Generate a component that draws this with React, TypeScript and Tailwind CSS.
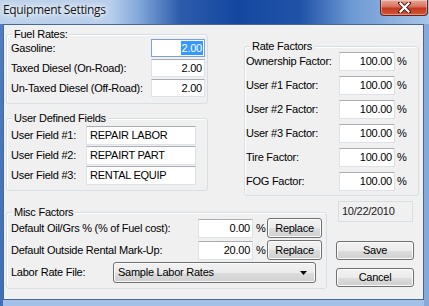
import React from "react";

const btn =
  "rounded-[3px] border border-[#707070] bg-[linear-gradient(#f2f2f2_0%,#ebebeb_50%,#dddddd_51%,#cfcfcf_100%)] shadow-[inset_0_0_0_1px_#fbfbfb] flex items-center justify-center";

const box = "bg-white border border-[#dde1e8] border-t-[#abadb3] flex items-center";

function Group({
  label,
  className,
  children,
}: {
  label: string;
  className: string;
  children: React.ReactNode;
}) {
  return (
    <div className={"relative rounded-[3px] border border-[#d5dfe5] shadow-[inset_1px_1px_0_#ffffff] " + className}>
      <div className="absolute left-[5px] top-[-7px] px-[2px] leading-[13px] bg-[#f0f0f0]">{label}</div>
      {children}
    </div>
  );
}

function NumBox({ value, w, focused }: { value: string; w: string; focused?: boolean }) {
  return (
    <div
      className={
        (focused
          ? "bg-white border border-[#7da2ce] flex items-center"
          : box) +
        " justify-end pr-[1px] h-[18px] " +
        w
      }
    >
      {focused ? (
        <span className="bg-[#3399ff] text-white leading-[14px] px-[1px]">{value}</span>
      ) : (
        <span className="pr-[1px]">{value}</span>
      )}
    </div>
  );
}

export default function App() {
  const fuel = [
    ["Gasoline:", "2.00", true],
    ["Taxed Diesel (On-Road):", "2.00", false],
    ["Un-Taxed Diesel (Off-Road):", "2.00", false],
  ] as const;
  const users = [
    ["User Field #1:", "REPAIR LABOR"],
    ["User Field #2:", "REPAIRT PART"],
    ["User Field #3:", "RENTAL EQUIP"],
  ];
  const rates = [
    "Ownership Factor:",
    "User #1 Factor:",
    "User #2 Factor:",
    "User #3 Factor:",
    "Tire Factor:",
    "FOG Factor:",
  ];

  return (
    <div className="w-[429px] h-[306px] flex flex-col overflow-hidden font-['Liberation_Sans',Arial,sans-serif] text-[11px] tracking-[-0.25px] text-black">
      {/* Title bar */}
      <div className="h-[24px] shrink-0 flex items-start bg-[linear-gradient(90deg,#bcd2ec_0%,#b6cdeb_26%,#7ca3d7_33%,#2d5cab_42%,#1448a0_55%,#2053a8_70%,#6d99d4_82%,#a9c5e8_100%)]">
        <div className="pl-[3px] pt-[2px] text-[12px] leading-[16px] tracking-[-0.35px] font-['Open_Sans',sans-serif] text-[#151515] [text-shadow:0_0_8px_#ffffff,0_0_4px_#ffffff,0_0_12px_#ffffff]">
          Equipment Settings
        </div>
        <div className="ml-auto mr-[1px] w-[48px] h-[16px] rounded-b-[4px] border border-t-0 border-[#6b2118] bg-[linear-gradient(#e9a898_0%,#d6705d_45%,#c2391f_55%,#cf5a3c_100%)] shadow-[inset_0_0_0_1px_rgba(255,255,255,0.35)] flex items-center justify-center">
          <svg width="13" height="11" viewBox="0 0 13 11">
            <path d="M2 1 L11 10 M11 1 L2 10" stroke="#4a1a12" strokeWidth="4" strokeLinecap="square" />
            <path d="M2.5 1.5 L10.5 9.5 M10.5 1.5 L2.5 9.5" stroke="#ffffff" strokeWidth="2.2" strokeLinecap="square" />
          </svg>
        </div>
      </div>

      {/* frame + client */}
      <div className="flex-1 flex bg-[linear-gradient(90deg,#5f8bc9_0%,#8db0de_100%)]">
        <div className="w-[3px] shrink-0 bg-[linear-gradient(#4f7dc0,#3f6fb6)]" />
        <div className="flex-1 flex flex-col">
          <div className="h-[276px] border border-[#47679a] bg-[#f0f0f0] flex flex-col pl-[2px]">
            {/* top section */}
            <div className="flex items-start">
              <div className="flex flex-col w-[202px] mt-[9px]">
                <Group label="Fuel Rates:" className="pt-[4px] pb-[6px] pl-[4px] pr-[2px] flex flex-col gap-[2px]">
                  {fuel.map(([l, v, f]) => (
                    <div key={l} className="flex items-center h-[18px]">
                      <span className="flex-1">{l}</span>
                      <NumBox value={v} w="w-[54px]" focused={f} />
                    </div>
                  ))}
                </Group>
                <Group label="User Defined Fields" className="mt-[14px] pt-[7px] pb-[5px] pl-[4px] flex flex-col gap-[1px]">
                  {users.map(([l, v]) => (
                    <div key={l} className="flex items-center h-[19px]">
                      <span className="w-[75px]">{l}</span>
                      <div className={box + " w-[110px] h-[19px] pl-[3px]"}>{v}</div>
                    </div>
                  ))}
                </Group>
              </div>
              <div className="ml-[36px] mt-[21px] w-[175px]">
                <Group label="Rate Factors" className="pt-[5px] pb-[4px] pl-[1px] flex flex-col gap-[5px]">
                  {rates.map((l) => (
                    <div key={l} className="flex items-center h-[19px]">
                      <span className="w-[93px]">{l}</span>
                      <div className={box + " w-[56px] h-[19px] justify-end pr-[2px]"}>100.00</div>
                      <span className="ml-[2px]">%</span>
                    </div>
                  ))}
                </Group>
              </div>
            </div>

            {/* bottom section */}
            <div className="flex items-start">
              <Group label="Misc Factors" className="mt-[16px] w-[321px] pt-[5px] pb-[5px] pl-[4px] flex flex-col gap-[2px]">
                <div className="flex items-center h-[20px]">
                  <span className="w-[187px]">Default Oil/Grs % (% of Fuel cost):</span>
                  <div className={box + " w-[55px] h-[19px] justify-end pr-[2px]"}>0.00</div>
                  <span className="ml-[3px] w-[8px]">%</span>
                  <div className={btn + " ml-[3px] w-[55px] h-[20px]"}>Replace</div>
                </div>
                <div className="flex items-center h-[20px]">
                  <span className="w-[187px]">Default Outside Rental Mark-Up:</span>
                  <div className={box + " w-[55px] h-[19px] justify-end pr-[2px]"}>20.00</div>
                  <span className="ml-[3px] w-[8px]">%</span>
                  <div className={btn + " ml-[3px] w-[55px] h-[20px]"}>Replace</div>
                </div>
                <div className="flex items-center h-[21px]">
                  <span className="w-[102px]">Labor Rate File:</span>
                  <div className={btn + " w-[203px] h-[21px] !justify-between pl-[4px] pr-[8px]"}>
                    <span>Sample Labor Rates</span>
                    <svg width="7" height="4" viewBox="0 0 7 4">
                      <path d="M0 0 H7 L3.5 4 Z" fill="#000" />
                    </svg>
                  </div>
                </div>
              </Group>
              <div className="ml-[9px] mt-[5px] w-[78px] flex flex-col">
                <div className="ml-[2px] w-[75px] h-[21px] border border-[#d5dfe5] flex items-center pl-[3px] text-[#202020]">
                  10/22/2010
                </div>
                <div className={btn + " mt-[19px] h-[19px]"}>Save</div>
                <div className={btn + " mt-[8px] h-[19px]"}>Cancel</div>
              </div>
            </div>
          </div>
          <div className="flex-1 bg-[#a3c1e7]" />
        </div>
        <div className="w-[5px] shrink-0 bg-[#86a9da]" />
      </div>
    </div>
  );
}
